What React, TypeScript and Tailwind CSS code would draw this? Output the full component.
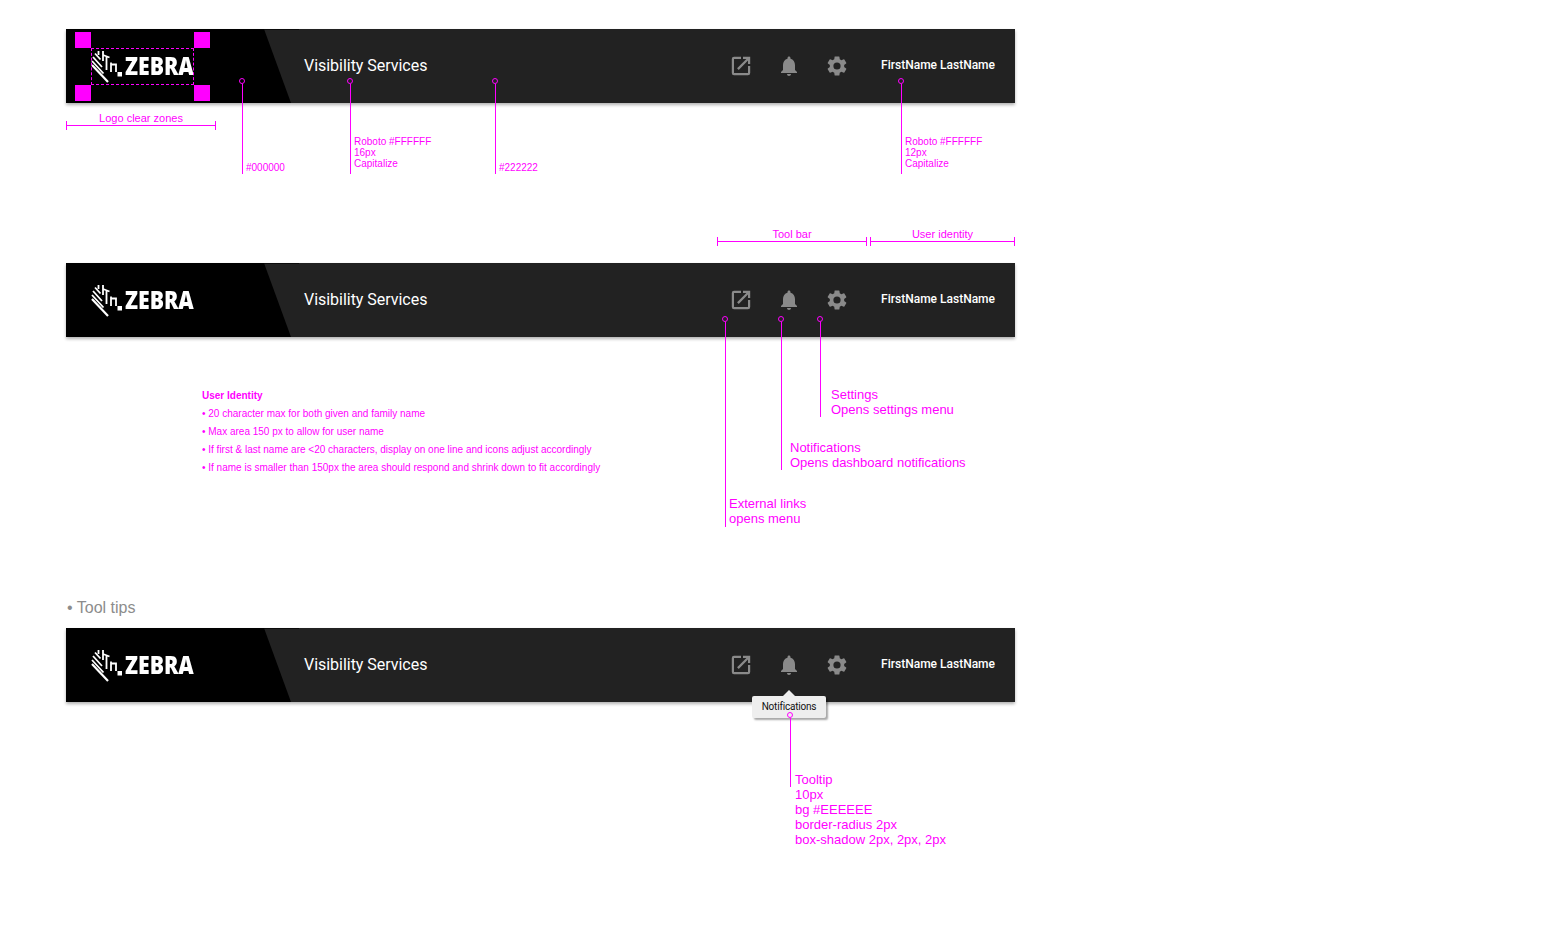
import React from "react";

const noteFont = "font-['Liberation_Sans',Arial,sans-serif] text-[#ff00ff] whitespace-nowrap";

function Logo() {
  return (
    <div className="flex items-center blur-[0.3px]">
      <svg width="34" height="34" viewBox="0 0 34 34" className="shrink-0">
        <g stroke="#fff" fill="none">
          <path d="M1 16 L17 33" strokeWidth="2.2" />
          <path d="M1 12 L12.5 24.5 M2 8 L11 18 M4 4.5 L9.5 10.5" strokeWidth="1.8" />
          <path d="M7.5 2 L7.5 6 M12 2 L12 12 M15.5 7 L15.5 21 M12 6 L18.5 8.5" strokeWidth="1.8" />
          <path d="M20 13.5 L20 23 M20 15.5 L25 15.5 L25 23" strokeWidth="1.8" />
        </g>
        <rect x="26.5" y="23" width="4.5" height="4.5" fill="#fff" />
      </svg>
      <span className="origin-left scale-x-[0.885] pb-px font-['Open_Sans',sans-serif] text-[24px] leading-none font-extrabold text-white">
        ZEBRA
      </span>
    </div>
  );
}

function Header({ tooltip, clear }: { tooltip?: boolean; clear?: boolean }) {
  return (
    <div className="relative flex h-[74px] w-[949px] shrink-0 items-center bg-[#222222] shadow-[0_2px_3px_rgba(0,0,0,0.3)]">
      <div className="absolute top-0 left-[190px] h-px w-[43px] bg-[#0c0c0c]" />
      <div className="relative flex h-full w-[225px] shrink-0 items-center bg-black pl-[25px] [clip-path:polygon(0_0,198px_0,225px_100%,0_100%)]">
        <Logo />
        {clear && (
          <div className="absolute top-[3px] left-[9px] grid grid-cols-[16px_103px_16px] grid-rows-[16px_37px_16px]">
            <div className="bg-[#ff00ff]" />
            <div />
            <div className="bg-[#ff00ff]" />
            <div />
            <div className="border border-dashed border-[#ff00ff]" />
            <div />
            <div className="bg-[#ff00ff]" />
            <div />
            <div className="bg-[#ff00ff]" />
          </div>
        )}
      </div>
      <span className="ml-[13px] font-['Roboto',sans-serif] text-[16px] tracking-[-0.03px] text-white">Visibility Services</span>
      <div className="ml-auto flex items-center text-[#8a8a8a]">
        <svg width="24" height="24" viewBox="0 0 24 24" fill="currentColor" className="mr-[24px]">
          <path d="M19 19H5V5h7V2.8H5A2.2 2.2 0 0 0 2.8 5v14A2.2 2.2 0 0 0 5 21.2h14a2.2 2.2 0 0 0 2.2-2.2v-7H19v7z" />
          <path d="M14 2.8v2.2h3.4l-9.3 9.3 1.6 1.6L19 6.6V10h2.2V2.8H14z" />
        </svg>
        <svg width="24" height="24" viewBox="0 0 24 24" fill="currentColor" className="mr-[24px]">
          <path d="M12 22c1.1 0 2-.9 2-2h-4c0 1.1.9 2 2 2zm6-6v-5c0-3.07-1.63-5.64-4.5-6.32V4c0-.83-.67-1.5-1.5-1.5s-1.5.67-1.5 1.5v.68C7.64 5.36 6 7.92 6 11v5l-2 2v1h16v-1l-2-2z" />
        </svg>
        <svg width="24" height="24" viewBox="0 0 24 24" fill="currentColor" className="mr-[32px]">
          <path d="M19.14 12.94c.04-.3.06-.61.06-.94s-.02-.64-.07-.94l2.03-1.58a.49.49 0 0 0 .12-.61l-1.92-3.32a.488.488 0 0 0-.59-.22l-2.39.96c-.5-.38-1.03-.7-1.62-.94l-.36-2.54a.484.484 0 0 0-.48-.41h-3.84c-.24 0-.43.17-.47.41l-.36 2.54c-.59.24-1.13.57-1.62.94l-2.39-.96a.49.49 0 0 0-.59.22L2.74 8.87c-.12.21-.08.47.12.61l2.03 1.58c-.05.3-.09.63-.09.94s.02.64.07.94l-2.03 1.58a.49.49 0 0 0-.12.61l1.92 3.32c.12.22.37.29.59.22l2.39-.96c.5.38 1.03.7 1.62.94l.36 2.54c.05.24.24.41.48.41h3.84c.24 0 .44-.17.47-.41l.36-2.54c.59-.24 1.13-.56 1.62-.94l2.39.96c.22.08.47 0 .59-.22l1.92-3.32c.12-.22.07-.47-.12-.61l-2.01-1.58zM12 15.6A3.6 3.6 0 1 1 12 8.4a3.6 3.6 0 0 1 0 7.2z" />
        </svg>
        <span className="mr-[20px] pb-[2px] font-['Roboto',sans-serif] text-[12px] font-medium text-white">
          FirstName LastName
        </span>
      </div>
      {tooltip && (
        <div className="absolute top-[68px] left-[686px] flex h-[22px] w-[74px] items-center justify-center rounded-[2px] bg-[#eeeeee] pb-px font-['Roboto',sans-serif] text-[10px] tracking-[-0.2px] text-[#111] shadow-[2px_2px_2px_rgba(0,0,0,0.35)]">
          <div className="absolute -top-[6px] left-1/2 -ml-[6px] size-0 border-x-[6px] border-b-[6px] border-x-transparent border-b-[#eeeeee]" />
          Notifications
        </div>
      )}
    </div>
  );
}

/* A call-out: a ring and a stem going down from a point on a header, with its note beside the stem. */
function Callout({
  width,
  stem,
  noteClass,
  lines,
}: {
  width: string;
  stem: string;
  noteClass: string;
  lines: string[];
}) {
  return (
    <div className={`flex shrink-0 items-start ${width}`}>
      <div className="flex w-[6px] shrink-0 flex-col items-center">
        <div className="size-[6px] rounded-full border-[1.5px] border-[#ff00ff]" />
        <div className={`w-px bg-[#ff00ff] ${stem}`} />
      </div>
      <div className={`pl-[1px] ${noteFont} ${noteClass}`}>
        {lines.map((l) => (
          <div key={l}>{l}</div>
        ))}
      </div>
    </div>
  );
}

function Dim({ width, label }: { width: string; label: string }) {
  return (
    <div className={`flex shrink-0 flex-col ${width}`}>
      <div className={`h-[6px] text-center text-[11px] leading-[6px] ${noteFont}`}>{label}</div>
      <div className="flex h-[9px] items-center border-x border-[#ff00ff]">
        <div className="h-px w-full bg-[#ff00ff]" />
      </div>
    </div>
  );
}

export default function App() {
  return (
    <div className="flex h-[950px] w-[1546px] flex-col overflow-hidden bg-white pt-[29px] pl-[66px]">
      <Header clear />

      <div className="relative -mt-[25px] flex w-[949px] items-start">
        <div className="mt-[37px] mr-[23px] flex shrink-0">
          <Dim width="w-[150px]" label="Logo clear zones" />
        </div>
        <Callout
          width="w-[108px]"
          stem="h-[90px]"
          noteClass="mt-[84px] text-[10px] leading-[11px]"
          lines={["#000000"]}
        />
        <Callout
          width="w-[145px]"
          stem="h-[90px]"
          noteClass="mt-[58px] text-[10px] leading-[11px]"
          lines={["Roboto #FFFFFF", "16px", "Capitalize"]}
        />
        <Callout
          width="w-[406px]"
          stem="h-[90px]"
          noteClass="mt-[84px] text-[10px] leading-[11px]"
          lines={["#222222"]}
        />
        <Callout
          width="w-[50px]"
          stem="h-[90px]"
          noteClass="mt-[58px] text-[10px] leading-[11px]"
          lines={["Roboto #FFFFFF", "12px", "Capitalize"]}
        />
      </div>

      <div className="mt-[57px] mb-[17px] flex w-[949px] justify-end gap-[3px]">
        <Dim width="w-[150px]" label="Tool bar" />
        <Dim width="w-[145px]" label="User identity" />
      </div>

      <Header />

      <div className="relative -mt-[21px] flex items-start">
        <div className={`mt-[71px] ml-[136px] w-[520px] shrink-0 text-[10px] leading-[18px] ${noteFont}`}>
          <div className="font-bold">User Identity</div>
          <div>• 20 character max for both given and family name</div>
          <div>• Max area 150 px to allow for user name</div>
          <div>• If first &amp; last name are &lt;20 characters, display on one line and icons adjust accordingly</div>
          <div>• If name is smaller than 150px the area should respond and shrink down to fit accordingly</div>
        </div>
        <Callout
          width="w-[56px]"
          stem="h-[205px]"
          noteClass="mt-[180px] text-[13px] leading-[15px]"
          lines={["External links", "opens menu"]}
        />
        <Callout
          width="w-[39px]"
          stem="h-[148px]"
          noteClass="mt-[124px] ml-[5px] text-[13px] leading-[15px]"
          lines={["Notifications", "Opens dashboard notifications"]}
        />
        <Callout
          width="w-[50px]"
          stem="h-[95px]"
          noteClass="mt-[71px] ml-[7px] text-[13px] leading-[15px]"
          lines={["Settings", "Opens settings menu"]}
        />
      </div>

      <div className="mt-[70px] mb-[9px] h-[22px] pl-px font-['Liberation_Sans',Arial,sans-serif] text-[16px] leading-[22px] text-[#8c8c8c]">
        • Tool tips
      </div>

      <Header tooltip />

      <div className="relative mt-[10px] ml-[721px] flex">
        <Callout
          width="w-[50px]"
          stem="h-[69px]"
          noteClass="mt-[60px] ml-px text-[13px] leading-[15px]"
          lines={["Tooltip", "10px", "bg #EEEEEE", "border-radius 2px", "box-shadow 2px, 2px, 2px"]}
        />
      </div>
    </div>
  );
}
